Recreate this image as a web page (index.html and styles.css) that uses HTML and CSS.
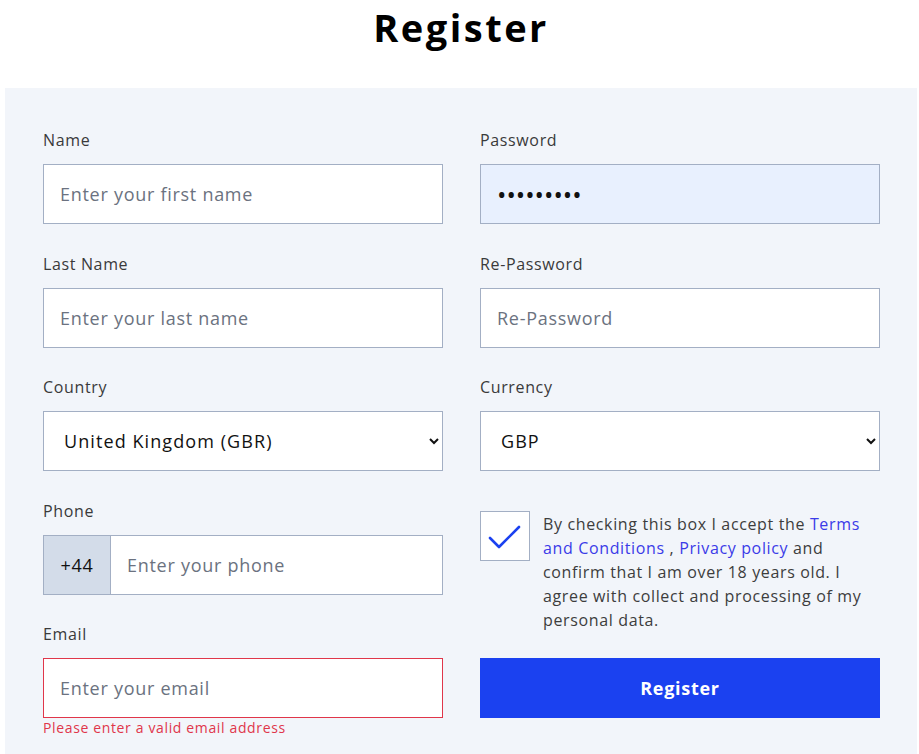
FILE: index.html
```html
<!DOCTYPE html>
<html lang="en">
<head>
<meta charset="utf-8">
<title>Register</title>
<link rel="stylesheet" href="styles.css">
</head>
<body>
<div class="page">
  <h1 class="title">Register</h1>
  <form class="panel" onsubmit="return false">
    <div class="col">
      <div class="field">
        <label class="label">Name</label>
        <input class="control" type="text" placeholder="Enter your first name">
      </div>
      <div class="field">
        <label class="label">Last Name</label>
        <input class="control" type="text" placeholder="Enter your last name">
      </div>
      <div class="field">
        <label class="label">Country</label>
        <select class="control select">
          <option>United Kingdom (GBR)</option>
        </select>
      </div>
      <div class="field">
        <label class="label">Phone</label>
        <div class="phone">
          <span class="prefix">+44</span>
          <input class="control phone-input" type="tel" placeholder="Enter your phone">
        </div>
      </div>
      <div class="field field-last">
        <label class="label">Email</label>
        <input class="control control-error" type="email" placeholder="Enter your email">
        <div class="error">Please enter a valid email address</div>
      </div>
    </div>
    <div class="col">
      <div class="field">
        <label class="label">Password</label>
        <input class="control autofill" type="password" value="123456789">
      </div>
      <div class="field">
        <label class="label">Re-Password</label>
        <input class="control" type="password" placeholder="Re-Password">
      </div>
      <div class="field">
        <label class="label">Currency</label>
        <select class="control select">
          <option>GBP</option>
        </select>
      </div>
      <div class="agree">
        <span class="checkbox">
          <svg width="48" height="48" viewBox="0 0 48 48" aria-hidden="true">
            <polyline points="9,26 18,35 38,15" fill="none" stroke="#1b41f0" stroke-width="2.6" stroke-linecap="round" stroke-linejoin="round"/>
          </svg>
        </span>
        <p class="agree-text">By checking this box I accept the <a class="link" href="#">Terms and Conditions</a> , <a class="link" href="#">Privacy policy</a> and confirm that I am over 18 years old. I agree with collect and processing of my personal data.</p>
      </div>
      <button class="btn" type="submit">Register</button>
    </div>
  </form>
</div>
</body>
</html>
```

FILE: styles.css
```css
* { box-sizing: border-box; }
html, body { margin: 0; padding: 0; background: #ffffff; }
body {
  font-family: "Open Sans", "Noto Sans", sans-serif;
  color: #333;
  width: 919px;
  height: 754px;
  overflow: hidden;
  letter-spacing: 0.04em;
}
.page { padding: 0 2px 0 5px; }
.title {
  margin: 0;
  height: 88px;
  text-align: center;
  font-size: 38px;
  line-height: 54px;
  font-weight: 700;
  color: #000;
  letter-spacing: 2.5px;
}
.panel {
  background: #f2f5fa;
  padding: 40px 37px 40px 38px;
  display: flex;
  gap: 37px;
  height: 680px;
}
.col { width: 400px; display: flex; flex-direction: column; }
.field { margin-bottom: 27.5px; }
.field-last { margin-bottom: 0; }
.label {
  display: block;
  font-size: 16px;
  line-height: 24px;
  margin-bottom: 12px;
  color: #3a3a3a;
}
.control {
  display: block;
  width: 100%;
  height: 60px;
  border: 1px solid #a3afc4;
  background: #fff;
  padding: 0 16px;
  font-family: inherit;
  font-size: 18px;
  letter-spacing: 0.04em;
  color: #111;
  outline: none;
  border-radius: 0;
}
.control::placeholder { color: #6b7280; }
.autofill {
  background: #e8f0fe;
  font-size: 25px;
  letter-spacing: 0;
}
.select {
  padding-left: 16px;
  color: #111;
  letter-spacing: 0.06em;
}
.phone { display: flex; height: 60px; }
.prefix {
  width: 67px;
  flex: none;
  display: flex;
  align-items: center;
  justify-content: center;
  background: #d3dce9;
  border: 1px solid #a3afc4;
  border-right: none;
  font-size: 18px;
  color: #111;
}
.phone-input { flex: 1; width: auto; }
.control-error { border-color: #e0364a; }
.error {
  font-size: 14px;
  line-height: 20px;
  color: #e0364a;
}
.agree {
  display: flex;
  gap: 13px;
  margin-top: 12.5px;
  align-items: flex-start;
}
.checkbox {
  width: 50px;
  height: 50px;
  flex: none;
  background: #fff;
  border: 1px solid #a3afc4;
  display: block;
}
.checkbox svg { display: block; }
.agree-text {
  margin: 1px 0 0;
  font-size: 16px;
  line-height: 24px;
  color: #3d3d3d;
}
.link { color: #3b3be8; text-decoration: none; }
.btn {
  margin-top: 26px;
  height: 60px;
  width: 100%;
  border: none;
  background: #1b41f0;
  color: #fff;
  font-family: inherit;
  font-size: 18px;
  font-weight: 700;
  letter-spacing: 0.04em;
  cursor: pointer;
}
```
